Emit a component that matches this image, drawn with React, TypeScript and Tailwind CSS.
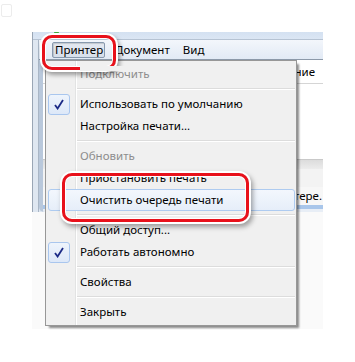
import React from "react";

function Check() {
  return (
    <div className="ml-[2px] w-[22px] h-[21px] rounded-[3px] border border-[#a9c6ee] bg-gradient-to-b from-[#eef4fc] to-[#dde8f8] flex items-center justify-center">
      <svg width="10" height="11" viewBox="0 0 10 11">
        <path d="M1 6 L3.6 9.5 L9 1" fill="none" stroke="#1b2a86" strokeWidth="1.8" strokeLinejoin="miter" />
      </svg>
    </div>
  );
}

type ItemProps = {
  label: string;
  disabled?: boolean;
  checked?: boolean;
  highlight?: boolean;
  clipTop?: boolean;
};

function Item({ label, disabled, checked, highlight, clipTop }: ItemProps) {
  const color = disabled ? "text-[#8d8d8d]" : "text-black";
  return (
    <div className="relative h-[22px] flex items-center">
      {highlight && (
        <div className="absolute top-0 bottom-0 left-[2px] right-[1px] rounded-[3px] border border-[#aecbf0] bg-gradient-to-b from-[#f3f7fd] to-[#e6eef9]" />
      )}
      <div className="relative w-[34px] h-[22px] flex items-center shrink-0">{checked && <Check />}</div>
      {clipTop ? (
        <div className="relative h-[16px] overflow-hidden">
          <div className="h-[5px] bg-[#f0f0f0] absolute top-0 left-0 right-0 z-10" />
          <span className={`block leading-[16px] ${color}`}>{label}</span>
        </div>
      ) : (
        <span className={`relative leading-[16px] ${color}`}>{label}</span>
      )}
    </div>
  );
}

function Sep() {
  return (
    <div className="h-[8px] flex items-center pl-[30px] pr-[1px]">
      <div className="w-full h-[2px] border-t border-[#dcdcdc] border-b border-b-white" />
    </div>
  );
}

export default function App() {
  return (
    <div className="relative w-[355px] h-[362px] bg-white overflow-hidden font-['Noto_Sans','Open_Sans',sans-serif] text-[11.5px]">
      {/* faint desktop icon */}
      <div className="absolute left-[1px] top-[4px] w-[11px] h-[13px] rounded-[2px] border border-[#ececec]" />

      <div className="pt-[32px] pl-[32px]">
        <div className="w-[291px] h-[297px] bg-[#fafafa]">
          {/* window */}
          <div className="h-[180px] flex flex-col border-l border-[#9aa6b5] bg-[#dfe7f1]">
            {/* title remainder */}
            <div className="relative h-[8px] bg-gradient-to-b from-[#d4e1f1] to-[#dbe6f4] border-b border-[#b6c3d3]">
              <div className="absolute left-[21px] top-0 w-[5px] h-[2px] rounded-b-full bg-[#3fae3a]" />
            </div>
            <div className="flex-1 flex">
              <div className="w-[5px] bg-[#dfe7f1]" />
              <div className="flex-1 flex flex-col border-l border-[#a9b6c6]">
                {/* menu bar */}
                <div className="h-[20px] flex items-center bg-gradient-to-b from-[#f3f6fb] to-[#e2eaf5] border-b border-[#8c99a9] pl-[13px]">
                  <div className="h-[16px] w-[53px] pl-[2px] flex items-center rounded-[2px] border border-[#8799ae] bg-gradient-to-b from-[#e4e9f1] to-[#d7dfea] shadow-[inset_1px_1px_1px_rgba(0,0,0,0.15)]">
                    <span className="leading-none">Принтер</span>
                  </div>
                  <span className="ml-[10px] leading-none">Документ</span>
                  <span className="ml-[13px] leading-none">Вид</span>
                </div>
                {/* content */}
                <div className="flex-1 flex flex-col border-l-[4px] border-[#b9c8db] rounded-bl-[5px] bg-[#f0f0f0] overflow-hidden">
                  <div className="h-[24px] bg-white border-b border-[#d5d5d5] flex items-center justify-end pr-[8px]">
                    <span>Состояние</span>
                  </div>
                  <div className="h-[75px] bg-white" />
                  <div className="h-[10px] bg-gradient-to-b from-[#dcdcdc] to-[#ececec] border-t border-[#c9c9c9]" />
                  <div className="h-[18px] bg-[#f3f3f3]" />
                  <div className="h-[18px] bg-[#f7f7f7] flex items-center justify-end pr-[1px] overflow-hidden">
                    <span className="whitespace-nowrap">в принтере.</span>
                  </div>
                  <div className="h-[4px] bg-[#a9c6ea]" />
                  <div className="flex-1 bg-[#e8eef6]" />
                </div>
              </div>
            </div>
          </div>
        </div>
      </div>

      {/* dropdown menu */}
      <div className="absolute left-[45px] top-[60px] w-[252px] border border-[#979797] bg-[#f0f0f0] shadow-[3px_3px_2px_-1px_rgba(0,0,0,0.45)] py-[2px]">
        <div className="absolute left-[29px] top-0 bottom-0 w-[2px] border-l border-[#e2e3e3] border-r border-r-white" />
        <Item label="Подключить" disabled clipTop />
        <Sep />
        <Item label="Использовать по умолчанию" checked />
        <Item label="Настройка печати..." />
        <Sep />
        <Item label="Обновить" disabled />
        <Item label="Приостановить печать" />
        <Item label="Очистить очередь печати" highlight />
        <Sep />
        <Item label="Общий доступ..." />
        <Item label="Работать автономно" checked />
        <Sep />
        <Item label="Свойства" />
        <Sep />
        <Item label="Закрыть" />
      </div>

      {/* annotation boxes */}
      <div className="absolute left-[42px] top-[35px] w-[74px] h-[35px] rounded-[10px] border-[3px] border-[#e8111b] shadow-[0_0_0_2px_#fff,2px_3px_4px_2px_rgba(0,0,0,0.35),inset_0_0_0_1px_#fff]" />
      <div className="absolute left-[62px] top-[173px] w-[187px] h-[49px] rounded-[10px] border-[3px] border-[#e8111b] shadow-[0_0_0_2px_#fff,2px_3px_5px_2px_rgba(0,0,0,0.35),inset_0_0_0_1px_#fff]" />
    </div>
  );
}
